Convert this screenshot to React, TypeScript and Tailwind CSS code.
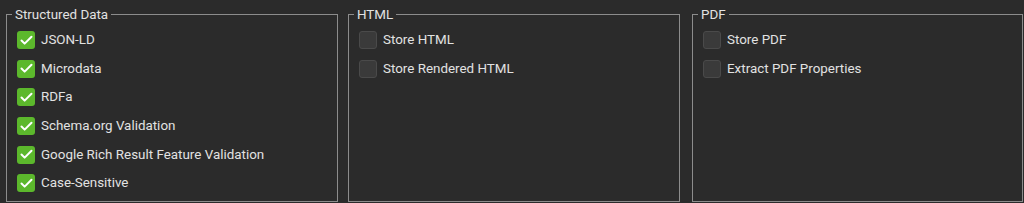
import { Check } from 'lucide-react';

type Item = { label: string; checked: boolean };

const groups: { title: string; items: Item[]; width: string }[] = [
  {
    title: 'Structured Data',
    width: 'w-[332px]',
    items: [
      { label: 'JSON-LD', checked: true },
      { label: 'Microdata', checked: true },
      { label: 'RDFa', checked: true },
      { label: 'Schema.org Validation', checked: true },
      { label: 'Google Rich Result Feature Validation', checked: true },
      { label: 'Case-Sensitive', checked: true },
    ],
  },
  {
    title: 'HTML',
    width: 'w-[332px]',
    items: [
      { label: 'Store HTML', checked: false },
      { label: 'Store Rendered HTML', checked: false },
    ],
  },
  {
    title: 'PDF',
    width: 'w-[331px]',
    items: [
      { label: 'Store PDF', checked: false },
      { label: 'Extract PDF Properties', checked: false },
    ],
  },
];

function Box({ checked }: { checked: boolean }) {
  if (checked) {
    return (
      <span className="flex h-[18px] w-[18px] shrink-0 items-center justify-center rounded-[3px] bg-[#5cb82c]">
        <Check size={15} strokeWidth={3.2} className="text-white" />
      </span>
    );
  }
  return (
    <span className="h-[18px] w-[18px] shrink-0 rounded-[3px] border border-[#4a4a4a] bg-[#3a3a3a]" />
  );
}

export default function App() {
  return (
    <div
      className="flex h-[203px] w-[1024px] gap-[10px] overflow-hidden bg-[#2b2b2b] pl-[6px] text-[13.4px] text-[#e2e2e2]"
      style={{ fontFamily: 'Roboto, "Liberation Sans", sans-serif' }}
    >
      {groups.map((g, i) => (
        <fieldset
          key={g.title}
          className={`${g.width} ${i === 2 ? 'ml-[2px]' : ''} mt-[7px] h-[195px] shrink-0 border border-[#8c8c8c] pl-[10px]`}
        >
          <legend className="-ml-[5px] px-[3px] leading-[15px]">{g.title}</legend>
          <div className="flex flex-col pt-[4px]">
            {g.items.map((it) => (
              <label key={it.label} className="flex h-[28.6px] items-center gap-[6px]">
                <Box checked={it.checked} />
                <span>{it.label}</span>
              </label>
            ))}
          </div>
        </fieldset>
      ))}
    </div>
  );
}
